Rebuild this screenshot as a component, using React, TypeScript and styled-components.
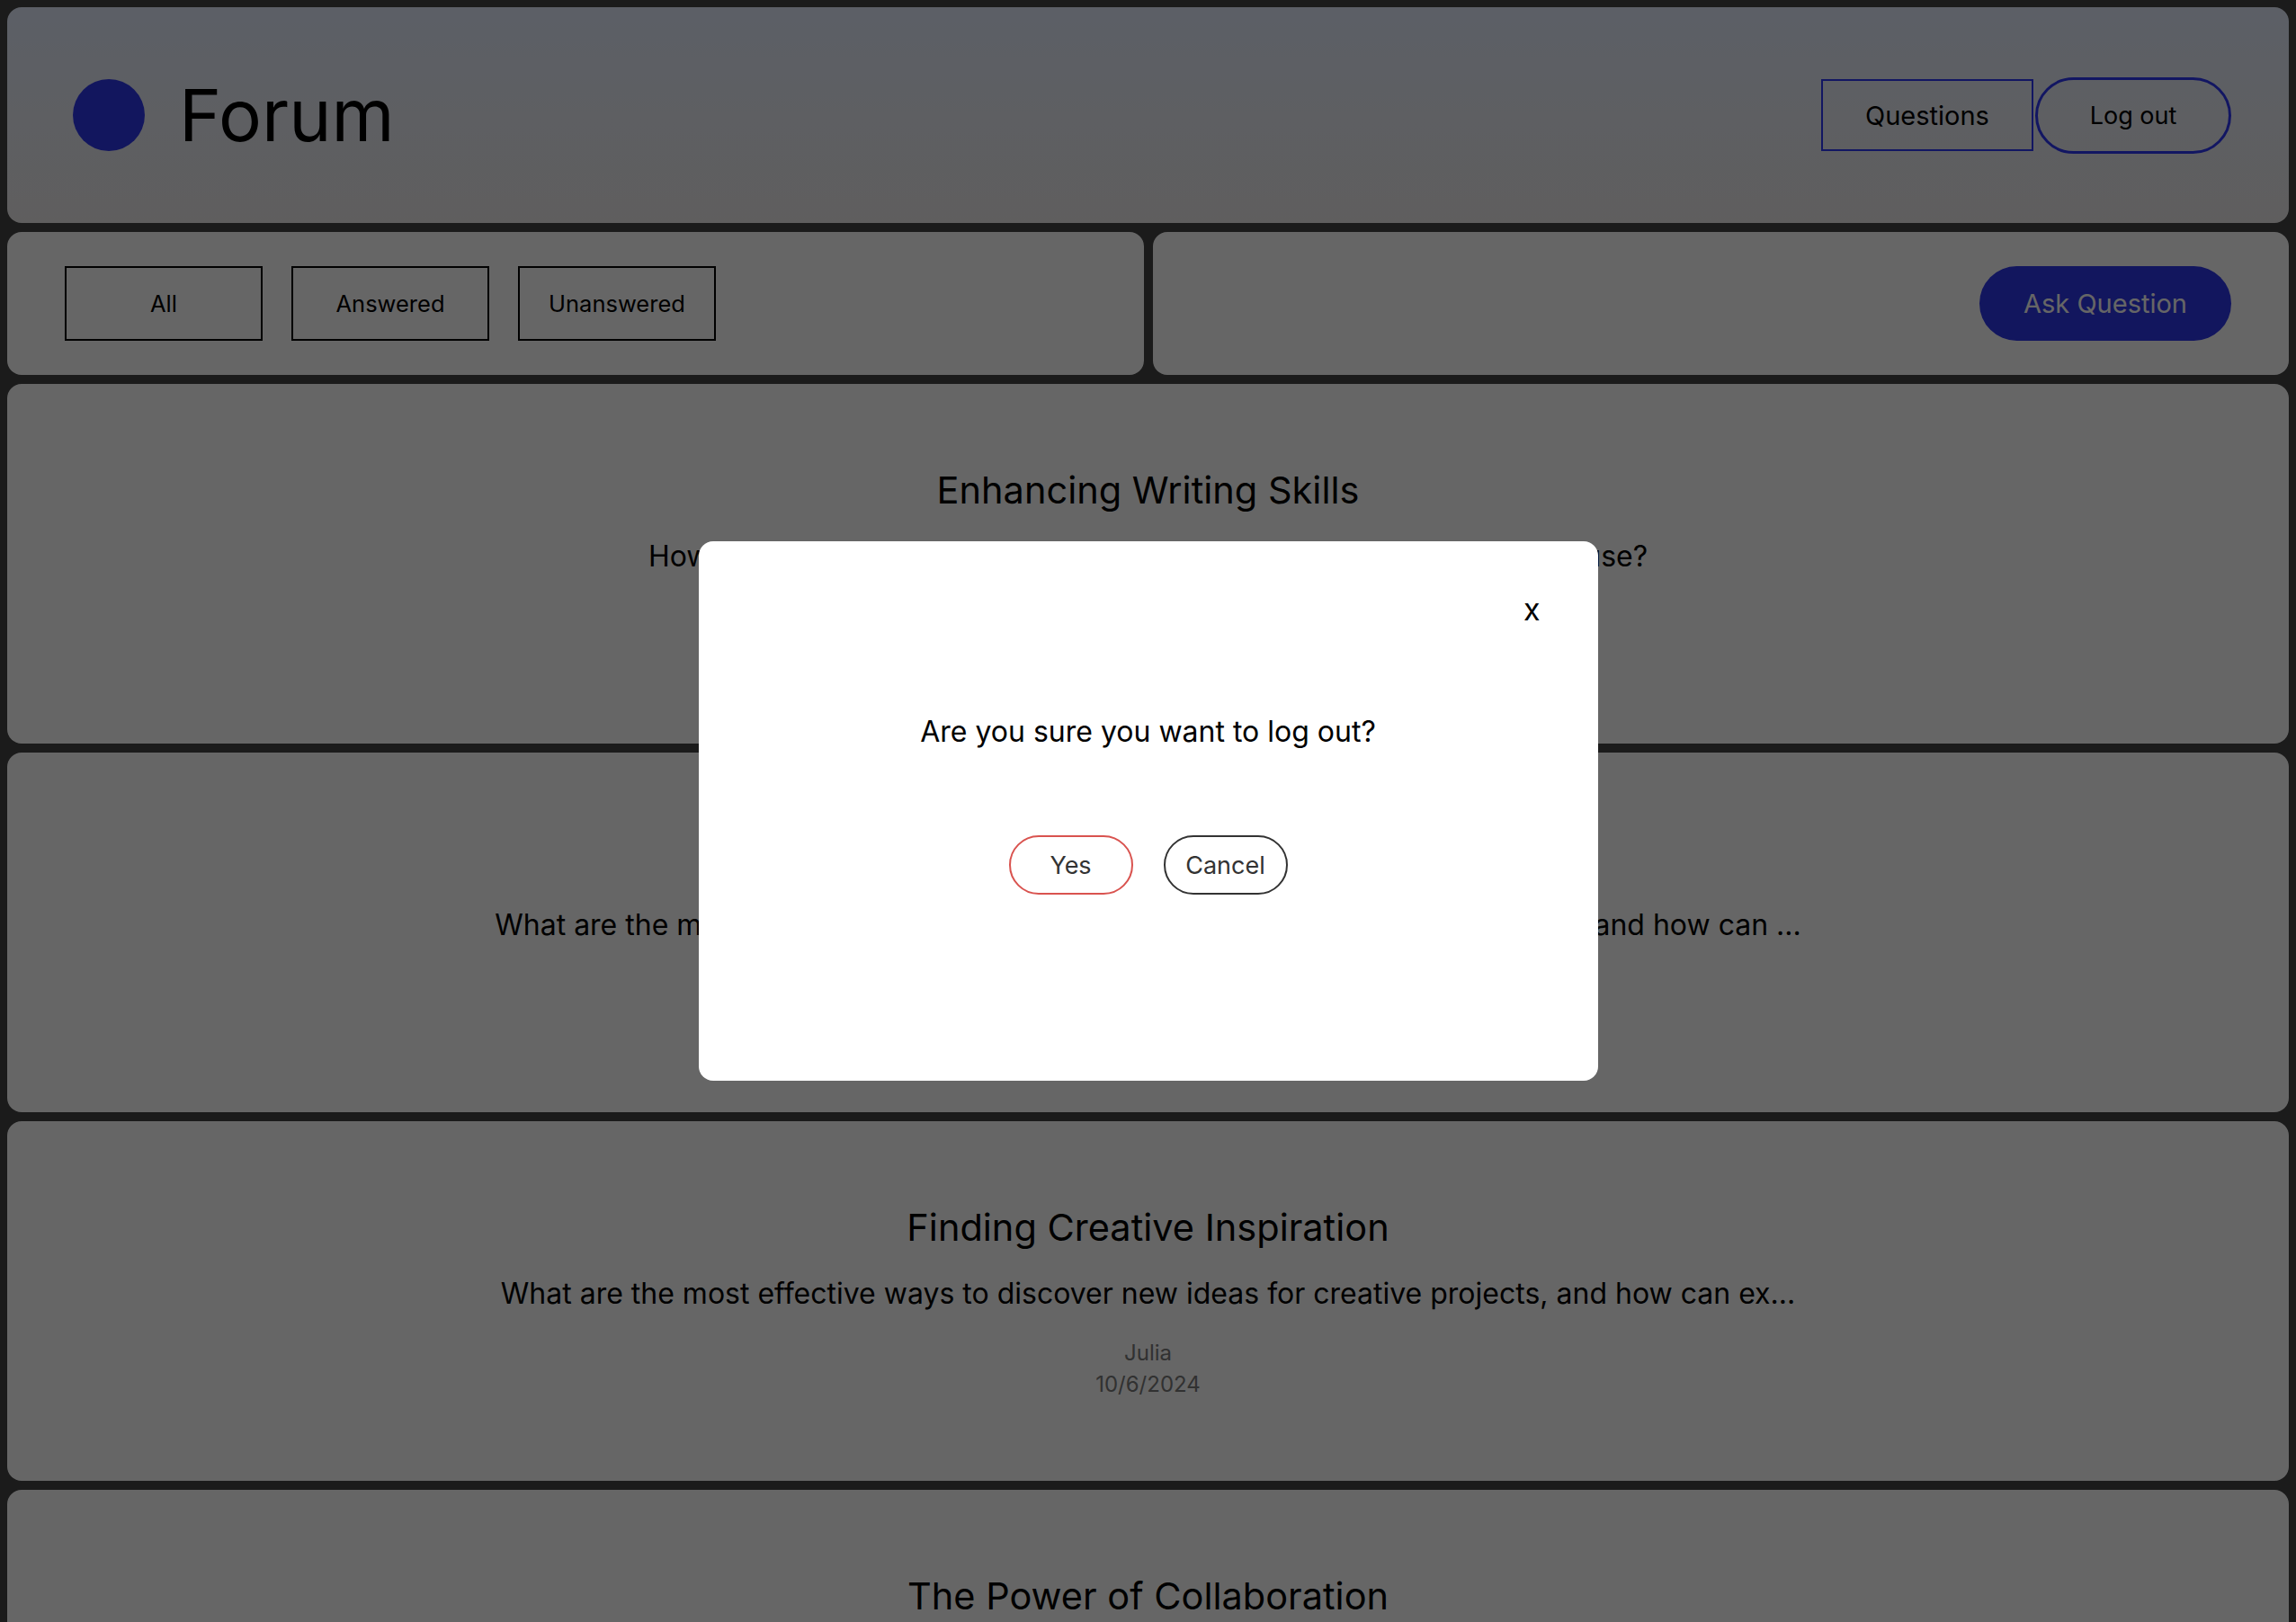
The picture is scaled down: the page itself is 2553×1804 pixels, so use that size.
import React from 'react'
import styled, { createGlobalStyle } from 'styled-components'

const GlobalStyle = createGlobalStyle`
  body {
    margin: 8px;
    background: #444444;
    font-family: Inter, "Noto Sans", sans-serif;
    color: #000;
  }
  * {
    box-sizing: border-box;
  }
`

const Page = styled.div`
  display: flex;
  flex-direction: column;
  gap: 10px;
`

const Header = styled.header`
  display: flex;
  align-items: center;
  justify-content: space-between;
  height: 240px;
  padding: 0 64px 0 73px;
  border-radius: 16px;
  background: linear-gradient(to bottom, #e6eeff, #eeecec);
`

const Brand = styled.div`
  display: flex;
  align-items: center;
  gap: 38px;
`

const Logo = styled.div`
  width: 80px;
  height: 80px;
  border-radius: 50%;
  background: #2f37eb;
`

const BrandName = styled.h1`
  margin: 0;
  font-size: 80px;
  font-weight: 400;
  line-height: 1;
`

const Nav = styled.nav`
  display: flex;
  align-items: center;
  gap: 2px;
`

const NavButton = styled.button<{ $pill?: boolean }>`
  font-family: Inter, sans-serif;
  font-size: ${p => (p.$pill ? '27px' : '29px')};
  color: #000;
  background: transparent;
  cursor: pointer;
  border: ${p => (p.$pill ? '3px' : '2px')} solid #2f37f5;
  border-radius: ${p => (p.$pill ? '43px' : '0')};
  height: ${p => (p.$pill ? '85px' : '80px')};
  width: ${p => (p.$pill ? '218px' : '236px')};
  padding: 0;
  line-height: 1;
`

const Toolbar = styled.div`
  display: grid;
  grid-template-columns: 1fr 1fr;
  gap: 10px;
`

const Panel = styled.div<{ $end?: boolean }>`
  display: flex;
  align-items: center;
  justify-content: ${p => (p.$end ? 'flex-end' : 'flex-start')};
  gap: 32px;
  height: 159px;
  padding: 0 64px;
  border-radius: 16px;
  background: #fff;
`

const FilterButton = styled.button`
  width: 220px;
  height: 83px;
  font-family: Inter, sans-serif;
  font-size: 25.5px;
  color: #000;
  background: transparent;
  border: 2px solid #000;
  border-radius: 0;
  cursor: pointer;
`

const AskButton = styled.button`
  width: 280px;
  height: 83px;
  padding: 0;
  font-family: Inter, sans-serif;
  font-size: 29px;
  color: #fff;
  background: #2f37eb;
  border: none;
  border-radius: 42px;
  cursor: pointer;
`

const QuestionCard = styled.article`
  display: flex;
  flex-direction: column;
  align-items: center;
  justify-content: center;
  height: 400px;
  border-radius: 16px;
  background: #fff;
  text-align: center;
`

const QuestionTitle = styled.h2`
  margin: 0;
  font-size: 41.5px;
  font-weight: 400;
`

const QuestionBody = styled.p`
  margin: 29px 0 0;
  font-size: 32px;
`

const Meta = styled.span<{ $gap: number }>`
  display: block;
  margin-top: ${p => p.$gap}px;
  font-size: 24px;
  color: #7a7a7a;
`

const Overlay = styled.div`
  position: fixed;
  inset: 0;
  display: flex;
  align-items: center;
  justify-content: center;
  background: rgba(0, 0, 0, 0.6);
`

const Modal = styled.div`
  display: flex;
  flex-direction: column;
  width: 1000px;
  height: 600px;
  padding: 55px 64px;
  border-radius: 16px;
  background: #fff;
`

const CloseRow = styled.div`
  display: flex;
  justify-content: flex-end;
`

const CloseButton = styled.button`
  padding: 0;
  font-family: Inter, sans-serif;
  font-size: 34px;
  color: #000;
  background: none;
  border: none;
  cursor: pointer;
`

const Message = styled.p`
  margin: 96px 0 0;
  font-size: 32px;
  text-align: center;
`

const Actions = styled.div`
  display: flex;
  justify-content: center;
  gap: 34px;
  margin-top: 96px;
`

const ActionButton = styled.button<{ $danger?: boolean }>`
  width: 138px;
  height: 66px;
  font-family: Inter, sans-serif;
  font-size: 27px;
  color: #333;
  background: #fff;
  border: 2px solid ${p => (p.$danger ? '#d9534f' : '#333')};
  border-radius: 33px;
  cursor: pointer;
`

const questions = [
  {
    title: 'Enhancing Writing Skills',
    body: 'How can I improve my writing, and which tools or resources should I use?',
    author: 'Mark',
    date: '10/8/2024',
  },
  {
    title: 'Learning New Languages',
    body: 'What are the most common challenges people face when they learn a language, and how can ...',
    author: 'Anna',
    date: '10/7/2024',
  },
  {
    title: 'Finding Creative Inspiration',
    body: 'What are the most effective ways to discover new ideas for creative projects, and how can ex...',
    author: 'Julia',
    date: '10/6/2024',
  },
  {
    title: 'The Power of Collaboration',
    body: 'How does working in a team change the way we solve problems, and what makes it succeed?',
    author: 'Tom',
    date: '10/5/2024',
  },
]

const App = () => {
  return (
    <>
      <GlobalStyle />
      <Page>
        <Header>
          <Brand>
            <Logo />
            <BrandName>Forum</BrandName>
          </Brand>
          <Nav>
            <NavButton>Questions</NavButton>
            <NavButton $pill>Log out</NavButton>
          </Nav>
        </Header>
        <Toolbar>
          <Panel>
            <FilterButton>All</FilterButton>
            <FilterButton>Answered</FilterButton>
            <FilterButton>Unanswered</FilterButton>
          </Panel>
          <Panel $end>
            <AskButton>Ask Question</AskButton>
          </Panel>
        </Toolbar>
        {questions.map(q => (
          <QuestionCard key={q.title}>
            <QuestionTitle>{q.title}</QuestionTitle>
            <QuestionBody>{q.body}</QuestionBody>
            <Meta $gap={32}>{q.author}</Meta>
            <Meta $gap={6}>{q.date}</Meta>
          </QuestionCard>
        ))}
      </Page>
      <Overlay>
        <Modal>
          <CloseRow>
            <CloseButton>x</CloseButton>
          </CloseRow>
          <Message>Are you sure you want to log out?</Message>
          <Actions>
            <ActionButton $danger>Yes</ActionButton>
            <ActionButton>Cancel</ActionButton>
          </Actions>
        </Modal>
      </Overlay>
    </>
  )
}

export default App
